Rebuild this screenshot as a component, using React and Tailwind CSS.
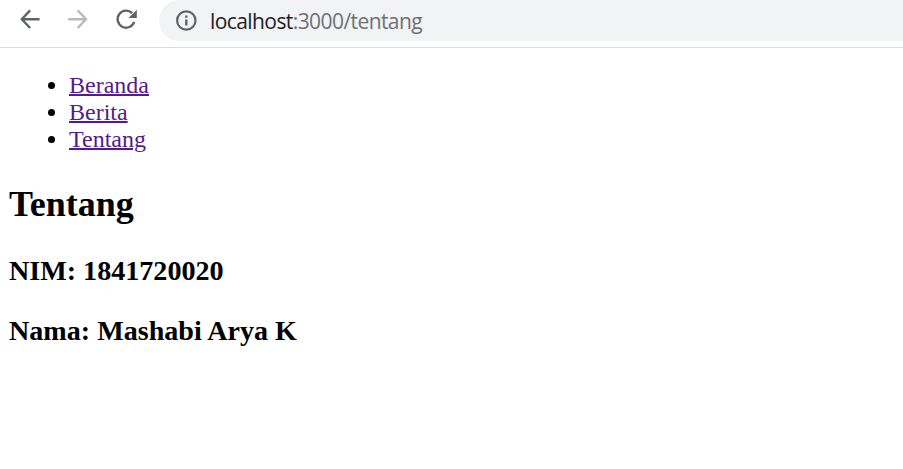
const links = ["Beranda", "Berita", "Tentang"];

function Toolbar() {
  return (
    <header className="flex h-12 items-start border-b border-[#dadce0] bg-white">
      <div className="flex h-10 w-[159px] shrink-0 items-center pl-4">
        <svg className="h-7 w-7 shrink-0" viewBox="0 0 28 28" fill="none" stroke="#5f6368" strokeWidth="2.4" aria-label="Back">
          <path d="M23.6 13.2H6M14.1 4.4L5.8 13.2L14.1 22" />
        </svg>
        <svg className="ml-5 h-7 w-7 shrink-0" viewBox="0 0 28 28" fill="none" stroke="#bababc" strokeWidth="2.4" aria-label="Forward">
          <path d="M4.2 13.2H22M13.7 4.4L22 13.2L13.7 22" />
        </svg>
        <svg className="ml-5 h-7 w-7 shrink-0" viewBox="0 0 28 28" fill="none" aria-label="Reload">
          <path d="M20.2 7.2A8.5 8.5 0 1 0 22.2 15.8" stroke="#5f6368" strokeWidth="2.4" />
          <path d="M24.8 3.7V12H16.5Z" fill="#5f6368" />
        </svg>
      </div>
      <div className="flex h-[41px] grow items-center rounded-bl-[20.5px] rounded-tl-[20.5px] bg-[#f1f3f4] pl-4">
        <svg className="h-[22px] w-[22px] shrink-0" viewBox="0 0 22 22" fill="none" aria-label="Site information">
          <circle cx="11.3" cy="10.5" r="9.2" stroke="#5f6368" strokeWidth="2.2" />
          <path d="M11.3 9.5V15.5M11.3 5.5V7.8" stroke="#5f6368" strokeWidth="2.4" />
        </svg>
        <span className="ml-[13px] whitespace-nowrap font-['Open_Sans','Noto_Sans',sans-serif] text-[21px] leading-[28px] tracking-[-0.58px] text-[#6d7175]">
          <span className="text-[#202124]">localhost</span>:3000/tentang
        </span>
      </div>
    </header>
  );
}

export default function App() {
  return (
    <div className="min-h-screen overflow-hidden bg-white font-['Liberation_Serif',serif] text-black">
      <Toolbar />
      <main className="px-[9px] pt-6">
        <ul className="list-disc pl-[60px] text-[24px] leading-[27px]">
          {links.map((label) => (
            <li key={label}>
              <a className="text-[#551a8b] underline decoration-2" href="#">{label}</a>
            </li>
          ))}
        </ul>
        <h2 className="mt-[31px] text-[36px] font-bold leading-[40px]">Tentang</h2>
        <h3 className="mt-[31px] text-[28.1px] font-bold leading-[32px]">NIM: 1841720020</h3>
        <h3 className="mt-[28px] text-[28.1px] font-bold leading-[32px]">Nama: Mashabi Arya K</h3>
      </main>
    </div>
  );
}
